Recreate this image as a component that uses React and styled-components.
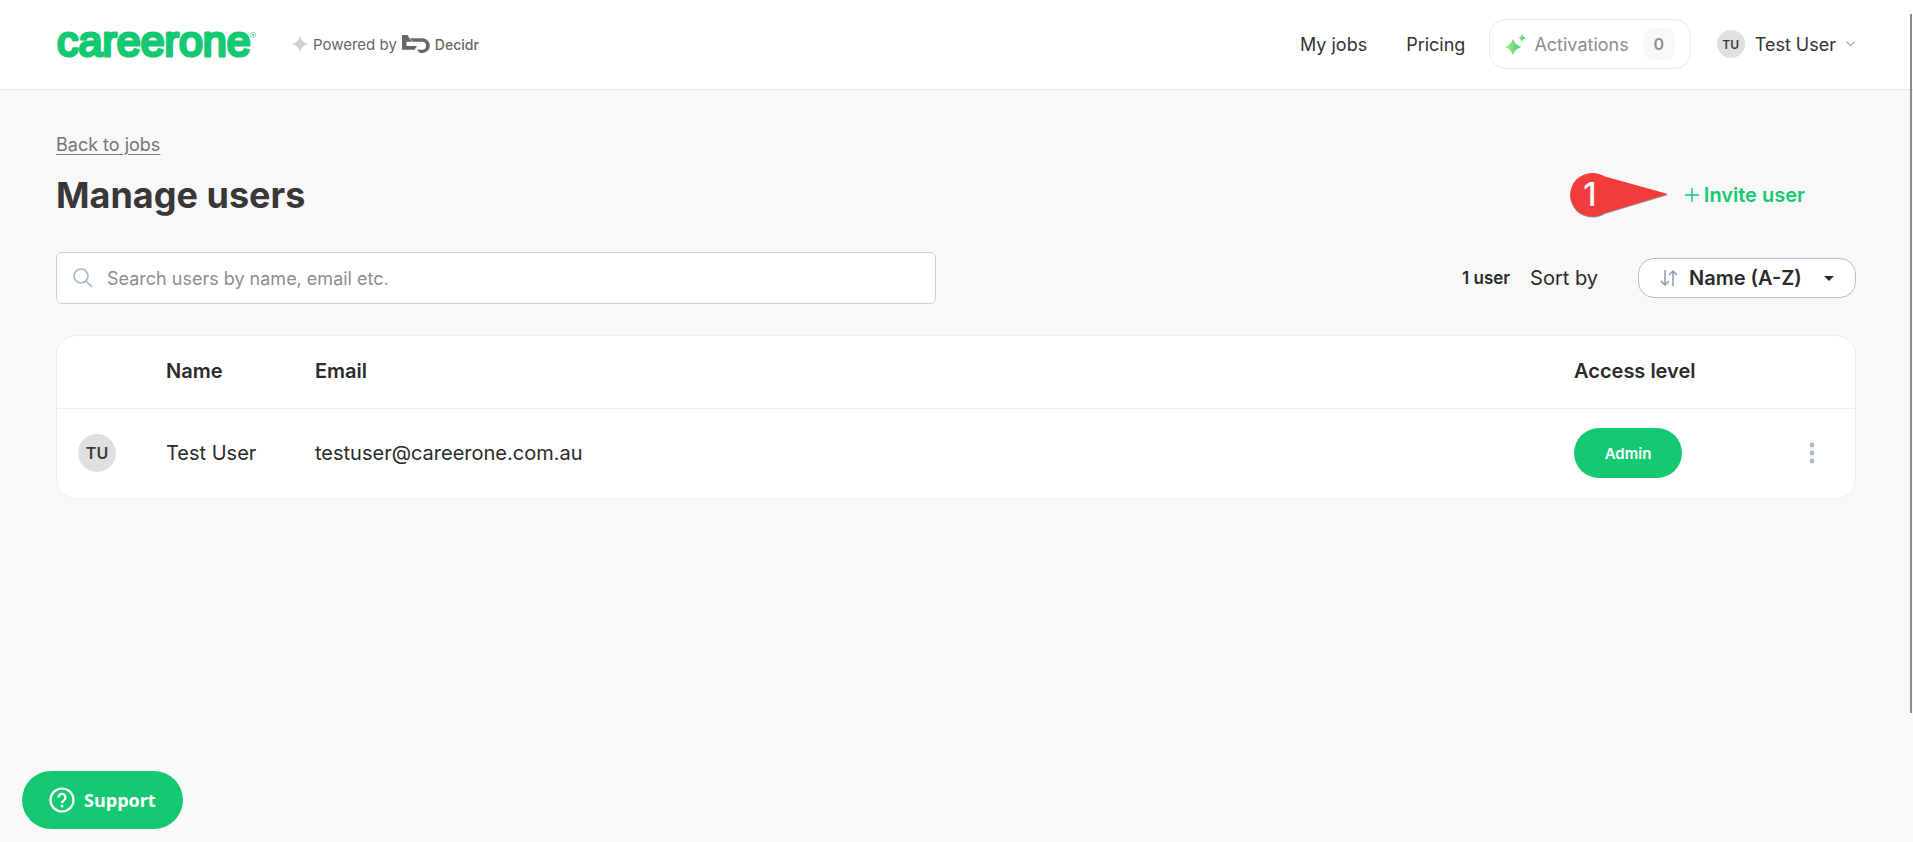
import React, { useState } from 'react';
import styled, { createGlobalStyle } from 'styled-components';

const GlobalStyle = createGlobalStyle`
    * {
        box-sizing: border-box;
    }

    body {
        margin: 0;
        background: #f8f8f8;
        color: #2b2b2b;
        font-family: Inter, "Liberation Sans", sans-serif;
        font-size: 18px;
        line-height: 25px;
    }

    button,
    input,
    select {
        margin: 0;
        padding: 0;
        border: 0;
        background: none;
        color: inherit;
        font: inherit;
    }

    button {
        cursor: pointer;
    }
`;

const Page = styled.div`
    min-height: 100vh;
`;

const Header = styled.header`
    display: flex;
    align-items: center;
    height: 90px;
    padding: 0 58px 1px 56px;
    background: #fff;
    border-bottom: 1px solid #e6e6e6;
`;

const Logo = styled.a`
    display: flex;
    align-items: flex-start;
    width: 200px;
    color: #15c972;
    text-decoration: none;
`;

const Wordmark = styled.svg`
    display: block;
    overflow: visible;
`;

const PoweredBy = styled.div`
    display: flex;
    align-items: center;
    gap: 5px;
    margin-left: 36px;
    color: #666;
    font-size: 15px;
`;

const Decidr = styled.span`
    font-size: 14px;
    font-weight: 500;
`;

const Nav = styled.nav`
    display: flex;
    align-items: center;
    margin-left: auto;
`;

const NavLink = styled.a`
    margin-right: ${({ $last }) => ($last ? '24px' : '39px')};
    color: #333;
    text-decoration: none;
`;

const Activations = styled.button`
    display: flex;
    align-items: center;
    height: 50px;
    margin-right: 26px;
    padding: 0 15px;
    border: 1px solid #ececec;
    border-radius: 16px;
    color: #8e8e8e;
`;

const Count = styled.span`
    display: flex;
    align-items: center;
    justify-content: center;
    width: 32px;
    height: 32px;
    margin-left: 14px;
    border-radius: 10px;
    background: #f8f8f8;
    color: #8e8e8e;
    font-size: 16px;
    font-weight: 600;
`;

const ActivationsLabel = styled.span`
    margin-left: 8px;
`;

const UserMenu = styled.button`
    display: flex;
    align-items: center;
    gap: 10px;
    color: #333;
`;

const Avatar = styled.span`
    display: flex;
    flex: none;
    align-items: center;
    justify-content: center;
    width: ${({ $size }) => $size}px;
    height: ${({ $size }) => $size}px;
    border-radius: 50%;
    background: #e0e0e0;
    color: #3b3b3b;
    font-size: ${({ $size }) => ($size > 30 ? 16 : 12)}px;
    font-weight: 600;
`;

const Main = styled.main`
    padding: 42px 57px 42px 56px;
`;

const BackLink = styled.a`
    color: #757575;
    text-underline-offset: 3px;
`;

const TitleRow = styled.div`
    display: flex;
    align-items: center;
    justify-content: space-between;
    margin-top: 15px;
    padding-right: 51px;
`;

const Title = styled.h1`
    margin: 0;
    color: #3a3739;
    font-size: 36px;
    font-weight: 700;
    line-height: 46px;
`;

const InviteButton = styled.button`
    position: relative;
    display: flex;
    align-items: center;
    gap: 5px;
    color: #15c972;
    font-size: 20px;
    font-weight: 600;
`;

const Callout = styled.svg`
    position: absolute;
    top: 50%;
    right: calc(100% + 16px);
    transform: translateY(-50%);
`;

const Toolbar = styled.div`
    display: flex;
    align-items: center;
    margin-top: 34px;
`;

const SearchBox = styled.label`
    display: flex;
    flex: 0 1 880px;
    align-items: center;
    gap: 14px;
    height: 52px;
    padding: 0 16px;
    border: 1px solid #c8d2df;
    border-radius: 6px;
    background: #fff;
`;

const SearchInput = styled.input`
    flex: 1;
    min-width: 0;
    outline: none;

    &::placeholder {
        color: #8e8e8e;
        opacity: 1;
    }
`;

const UserCount = styled.span`
    margin-left: auto;
    font-size: 17px;
    font-weight: 600;
`;

const SortLabel = styled.label`
    margin: 0 40px 0 20px;
    font-size: 20px;
`;

const SortBox = styled.div`
    display: flex;
    align-items: center;
    height: 40px;
    padding: 0 21px;
    border: 1px solid #b4c0d0;
    border-radius: 16px;
    background: #fff;
`;

const SortSelect = styled.select`
    width: 135px;
    margin-left: 11px;
    appearance: none;
    outline: none;
    font-size: 20px;
    font-weight: 600;
`;

const Card = styled.section`
    margin-top: 31px;
    border: 1px solid #eeeef6;
    border-radius: 20px;
    background: #fff;
    overflow: hidden;
`;

const Table = styled.table`
    width: 100%;
    border-collapse: collapse;
    table-layout: fixed;
    font-size: 20px;
    text-align: left;
`;

const HeadCell = styled.th`
    width: ${({ $width }) => $width || 'auto'};
    height: 72px;
    padding: 0;
    border-bottom: 1px solid #eeeef6;
    font-weight: 600;
`;

const Cell = styled.td`
    height: 90px;
    padding: 0;
    padding-left: ${({ $inset }) => ($inset ? '21px' : '0')};
`;

const AccessBadge = styled.span`
    display: flex;
    align-items: center;
    justify-content: center;
    width: 108px;
    height: 50px;
    border-radius: 25px;
    background: #15c972;
    color: #fff;
    font-size: 15px;
    font-weight: 600;
`;

const MoreButton = styled.button`
    display: flex;
    align-items: center;
    justify-content: center;
    width: 24px;
    height: 32px;
`;

const SupportButton = styled.button`
    position: fixed;
    left: 22px;
    bottom: 13px;
    display: flex;
    align-items: center;
    gap: 9px;
    height: 58px;
    padding: 0 27px;
    border-radius: 29px;
    background: #15c972;
    color: #fff;
    font-family: "Open Sans", "Noto Sans", sans-serif;
    font-size: 18px;
    font-weight: 700;
`;

const ScrollThumb = styled.div`
    position: fixed;
    top: 14px;
    right: 1px;
    width: 2px;
    height: 83vh;
    background: #8b8b8b;
`;

const USERS = [{ initials: 'TU', name: 'Test User', email: 'testuser@careerone.com.au', access: 'Admin' }];

function CareerOneMark() {
    return (
        <Wordmark width="196" height="30" viewBox="0 0 196 30" role="img" aria-label="careerone">
            <text
                x="1"
                y="27"
                fontFamily="Liberation Sans, Arial, sans-serif"
                fontSize="43"
                fontWeight="400"
                fill="currentColor"
                stroke="currentColor"
                strokeWidth="3.2"
                strokeLinejoin="round"
            >
                careerone
            </text>
            <circle cx="197" cy="6" r="2.6" fill="none" stroke="currentColor" strokeWidth="0.5" />
            <circle cx="197" cy="6" r="1" fill="currentColor" />
        </Wordmark>
    );
}

function DecidrMark() {
    return (
        <svg width="28" height="18" viewBox="0 0 28 18" fill="#666">
            <path d="M0 0h5.500l1.500 2.500L10 6.800H4.500v4.200H15l-2.500 3.800H0z" />
            <path d="M8 3.300h12.500a7.300 7.300 0 0 1 0 14.700H18l-3.200-3.200h5.200a4 4 0 0 0 0-8H10.500z" />
        </svg>
    );
}

export default function App() {
    const [query, setQuery] = useState('');
    const users = USERS.filter(({ name, email }) => `${name} ${email}`.toLowerCase().includes(query.toLowerCase()));

    return (
        <>
            <GlobalStyle />
            <Page>
                <Header>
                    <Logo href="#home">
                        <CareerOneMark />
                    </Logo>
                    <PoweredBy>
                        <svg width="16" height="16" viewBox="0 0 16 16" fill="#d0d0d0">
                            <path d="M8 0c1.600 4.800 3.200 6.400 8 8-4.800 1.600-6.400 3.200-8 8-1.600-4.800-3.200-6.400-8-8 4.800-1.600 6.400-3.200 8-8z" />
                        </svg>
                        Powered by
                        <DecidrMark />
                        <Decidr>Decidr</Decidr>
                    </PoweredBy>
                    <Nav>
                        <NavLink href="#jobs">My jobs</NavLink>
                        <NavLink href="#pricing" $last>
                            Pricing
                        </NavLink>
                        <Activations type="button">
                            <svg width="21" height="21" viewBox="0 0 21 21">
                                <defs>
                                    <linearGradient id="sparkle" x1="0" y1="0" x2="1" y2="0">
                                        <stop offset="0" stopColor="#b4ea7c" />
                                        <stop offset="1" stopColor="#35cf7c" />
                                    </linearGradient>
                                </defs>
                                <path
                                    fill="url(#sparkle)"
                                    d="M8 5c2 4.500 3.500 6 8 8-4.500 2-6 3.500-8 8-2-4.500-3.500-6-8-8 4.500-2 6-3.500 8-8z"
                                />
                                <path
                                    fill="url(#sparkle)"
                                    d="M17 0c.9 2.400 1.600 3.100 4 4-2.400.9-3.100 1.600-4 4-.9-2.400-1.600-3.100-4-4 2.400-.9 3.100-1.600 4-4z"
                                />
                            </svg>
                            <ActivationsLabel>Activations</ActivationsLabel>
                            <Count>0</Count>
                        </Activations>
                        <UserMenu type="button">
                            <Avatar $size={28}>TU</Avatar>
                            Test User
                            <svg width="9" height="6" viewBox="0 0 9 6" fill="none" stroke="#aaa" strokeWidth="1.3">
                                <path d="M.5.7l4 4 4-4" />
                            </svg>
                        </UserMenu>
                    </Nav>
                </Header>

                <Main>
                    <BackLink href="#jobs">Back to jobs</BackLink>
                    <TitleRow>
                        <Title>Manage users</Title>
                        <InviteButton type="button">
                            <Callout width="100" height="46" viewBox="0 0 100 46">
                                <path
                                    d="M23 2C29 2 33 4 36 5.500L99 23 36 42c-4 2-7 3.500-13 3.500a21.700 21.700 0 0 1 0-43.500z"
                                    fill="#555"
                                    opacity="0.6"
                                />
                                <path
                                    d="M23 1C29 1 33 3 36 4.500L99 22 36 41c-4 2-7 3.500-13 3.500a21.700 21.700 0 0 1 0-43.500z"
                                    fill="#f23c3c"
                                />
                                <text
                                    x="21"
                                    y="34"
                                    fill="#fff"
                                    fontFamily="Inter, sans-serif"
                                    fontSize="32"
                                    fontWeight="500"
                                    textAnchor="middle"
                                >
                                    1
                                </text>
                            </Callout>
                            <svg width="14" height="14" viewBox="0 0 14 14" stroke="currentColor" strokeWidth="1.4">
                                <path d="M7 0v14M0 7h14" />
                            </svg>
                            Invite user
                        </InviteButton>
                    </TitleRow>

                    <Toolbar>
                        <SearchBox>
                            <svg width="20" height="20" viewBox="0 0 20 20" fill="none" stroke="#a9b8cb" strokeWidth="1.7">
                                <circle cx="8" cy="8" r="7" />
                                <path d="M13 13l6 6" />
                            </svg>
                            <SearchInput
                                type="text"
                                aria-label="Search users"
                                placeholder="Search users by name, email etc."
                                value={query}
                                onChange={(e) => setQuery(e.target.value)}
                            />
                        </SearchBox>
                        <UserCount>1 user</UserCount>
                        <SortLabel htmlFor="sort">Sort by</SortLabel>
                        <SortBox>
                            <svg width="18" height="16" viewBox="0 0 18 16" fill="none" stroke="#8d9db3" strokeWidth="1.5">
                                <path d="M5 0v15M1 11l4 4 4-4M13 16V1M9 5l4-4 4 4" />
                            </svg>
                            <SortSelect id="sort">
                                <option>Name (A-Z)</option>
                            </SortSelect>
                            <svg width="10" height="5" viewBox="0 0 10 5" fill="#2b2b2b">
                                <path d="M0 0h10L5 5z" />
                            </svg>
                        </SortBox>
                    </Toolbar>

                    <Card>
                        <Table>
                            <thead>
                                <tr>
                                    <HeadCell $width="109px" aria-label="Avatar" />
                                    <HeadCell $width="149px">Name</HeadCell>
                                    <HeadCell>Email</HeadCell>
                                    <HeadCell $width="226px">Access level</HeadCell>
                                    <HeadCell $width="55px" aria-label="Actions" />
                                </tr>
                            </thead>
                            <tbody>
                                {users.map(({ initials, name, email, access }) => (
                                    <tr key={email}>
                                        <Cell $inset>
                                            <Avatar $size={38}>{initials}</Avatar>
                                        </Cell>
                                        <Cell>{name}</Cell>
                                        <Cell>{email}</Cell>
                                        <Cell>
                                            <AccessBadge>{access}</AccessBadge>
                                        </Cell>
                                        <Cell>
                                            <MoreButton type="button" aria-label="More actions">
                                                <svg width="6" height="22" viewBox="0 0 6 22" fill="#a9b8cb">
                                                    <circle cx="3" cy="3" r="2.400" />
                                                    <circle cx="3" cy="11" r="2.400" />
                                                    <circle cx="3" cy="19" r="2.400" />
                                                </svg>
                                            </MoreButton>
                                        </Cell>
                                    </tr>
                                ))}
                            </tbody>
                        </Table>
                    </Card>
                </Main>

                <SupportButton type="button">
                    <svg width="26" height="26" viewBox="0 0 26 26" fill="none" stroke="#fff" strokeWidth="2.2">
                        <circle cx="13" cy="13" r="11.500" />
                        <path d="M9.500 10.500a3.500 3.500 0 1 1 5.500 2.800c-1.200.8-2 1.300-2 2.900" />
                        <circle cx="13" cy="19" r="1.500" fill="#fff" stroke="none" />
                    </svg>
                    Support
                </SupportButton>
                <ScrollThumb />
            </Page>
        </>
    );
}
